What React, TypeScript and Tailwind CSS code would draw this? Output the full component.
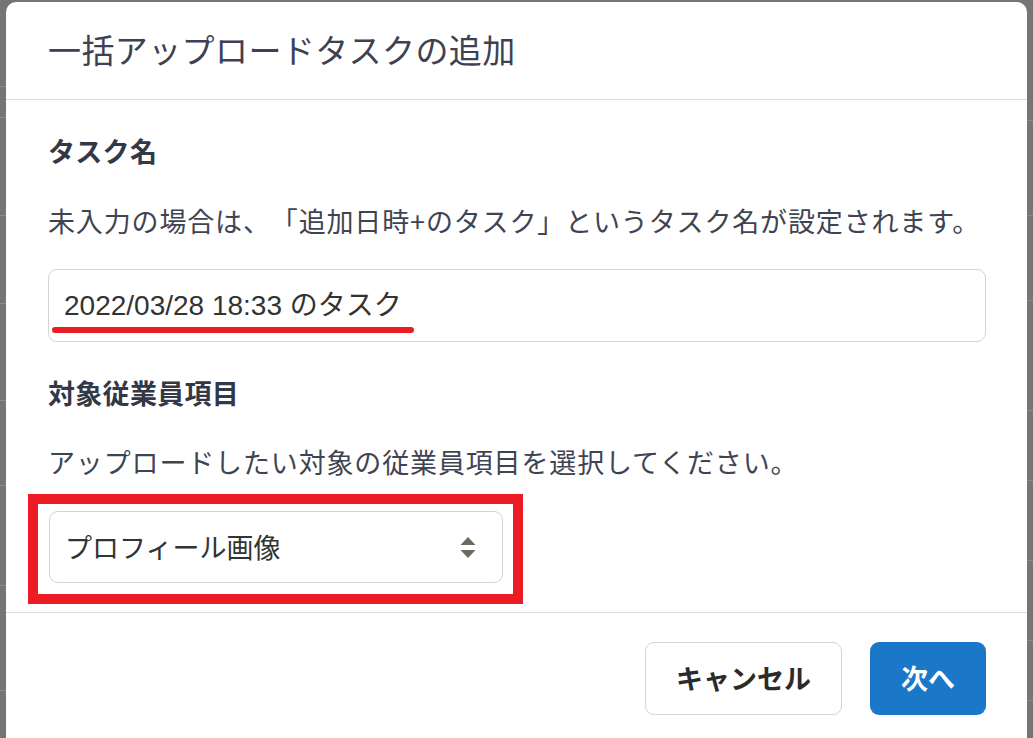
import React from "react";

const jp = { fontFamily: '"Noto Sans CJK JP", "Noto Sans", sans-serif' };
const mixed = { fontFamily: '"Liberation Sans", "Noto Sans CJK JP", sans-serif' };

function SortArrows() {
  return (
    <svg width="16" height="21" viewBox="0 0 16 21" aria-hidden="true">
      <path d="M8 0 L15.5 8 L0.5 8 Z" fill="#6b6a60" />
      <path d="M0.5 13 L15.5 13 L8 21 Z" fill="#6b6a60" />
    </svg>
  );
}

function BgStrip({ side }: { side: "left" | "right" }) {
  const lines = side === "left" ? [86, 117, 215, 303, 400, 485, 585, 690] : [120, 215, 300, 410, 480, 560, 640, 700];
  return (
    <div className="relative w-[6px] h-full bg-[#757575] overflow-hidden">
      {lines.map((y) => (
        <div key={y} className="absolute left-0 right-0 h-px bg-[#8a8a8a]" style={{ top: y }} />
      ))}
    </div>
  );
}

export default function App() {
  return (
    <div className="w-[1033px] h-[738px] overflow-hidden bg-[#757575] flex [text-spacing-trim:space-all]" style={jp}>
      <BgStrip side="left" />
      <div className="flex-1 pt-[2px]">
        <div className="bg-white rounded-t-[10px] h-[800px] flex flex-col">
          {/* Header */}
          <div className="h-[98px] border-b border-[#dcdcdc] flex items-center pl-[42px]">
            <h1 className="text-[33px] tracking-[0.4px] text-[#3e4152] font-normal leading-none pb-[2px]">
              一括アップロードタスクの追加
            </h1>
          </div>
          {/* Body */}
          <div className="pl-[42px] pr-[41px] flex flex-col">
            <div className="mt-[31px] h-[40px] flex items-center text-[27px] font-bold text-[#333846] tracking-[0.3px]">
              タスク名
            </div>
            <div className="mt-[30px] h-[40px] flex items-center text-[27px] text-[#3f4453] tracking-[0.85px] whitespace-nowrap">
              未入力の場合は、「追加日時+のタスク」というタスク名が設定されます。
            </div>
            <div className="mt-[28px] h-[73px] w-[938px] rounded-[9px] border border-[#d6d4d0] relative flex items-center pl-[15px]">
              <span className="text-[28px] text-[#333333]" style={mixed}>
                2022/03/28 18:33 のタスク
              </span>
              <div className="absolute left-[3px] top-[57px] w-[362px] h-[6px] rounded-full bg-[#ec1c24]" />
            </div>
            <div className="mt-[31px] h-[40px] flex items-center text-[27px] font-bold text-[#333846] tracking-[0.3px]">
              対象従業員項目
            </div>
            <div className="mt-[29px] h-[40px] flex items-center text-[27px] text-[#3f4453] tracking-[0.85px] whitespace-nowrap">
              アップロードしたい対象の従業員項目を選択してください。
            </div>
            <div className="mt-[12px] ml-[-20px] w-[495px] h-[110px] border-[10px] border-[#ec1c24] pt-[7px] pl-[11px] pr-[10px] pb-[11px]">
              <div className="h-[72px] rounded-[9px] border border-[#d6d4d0] flex items-center justify-between pl-[15px] pr-[26px]">
                <span className="text-[27px] text-[#333333]">プロフィール画像</span>
                <SortArrows />
              </div>
            </div>
          </div>
          {/* Footer */}
          <div className="mt-[8px] border-t border-[#dcdcdc] pt-[29px] pr-[41px] flex justify-end gap-[28px]">
            <button className="w-[197px] h-[73px] rounded-[9px] border border-[#d6d4d0] bg-white text-[27px] font-bold text-[#2b2b2b]">
              キャンセル
            </button>
            <button className="w-[116px] h-[73px] rounded-[9px] bg-[#1b78c8] text-[27px] font-bold text-white">
              次へ
            </button>
          </div>
        </div>
      </div>
      <BgStrip side="right" />
    </div>
  );
}
